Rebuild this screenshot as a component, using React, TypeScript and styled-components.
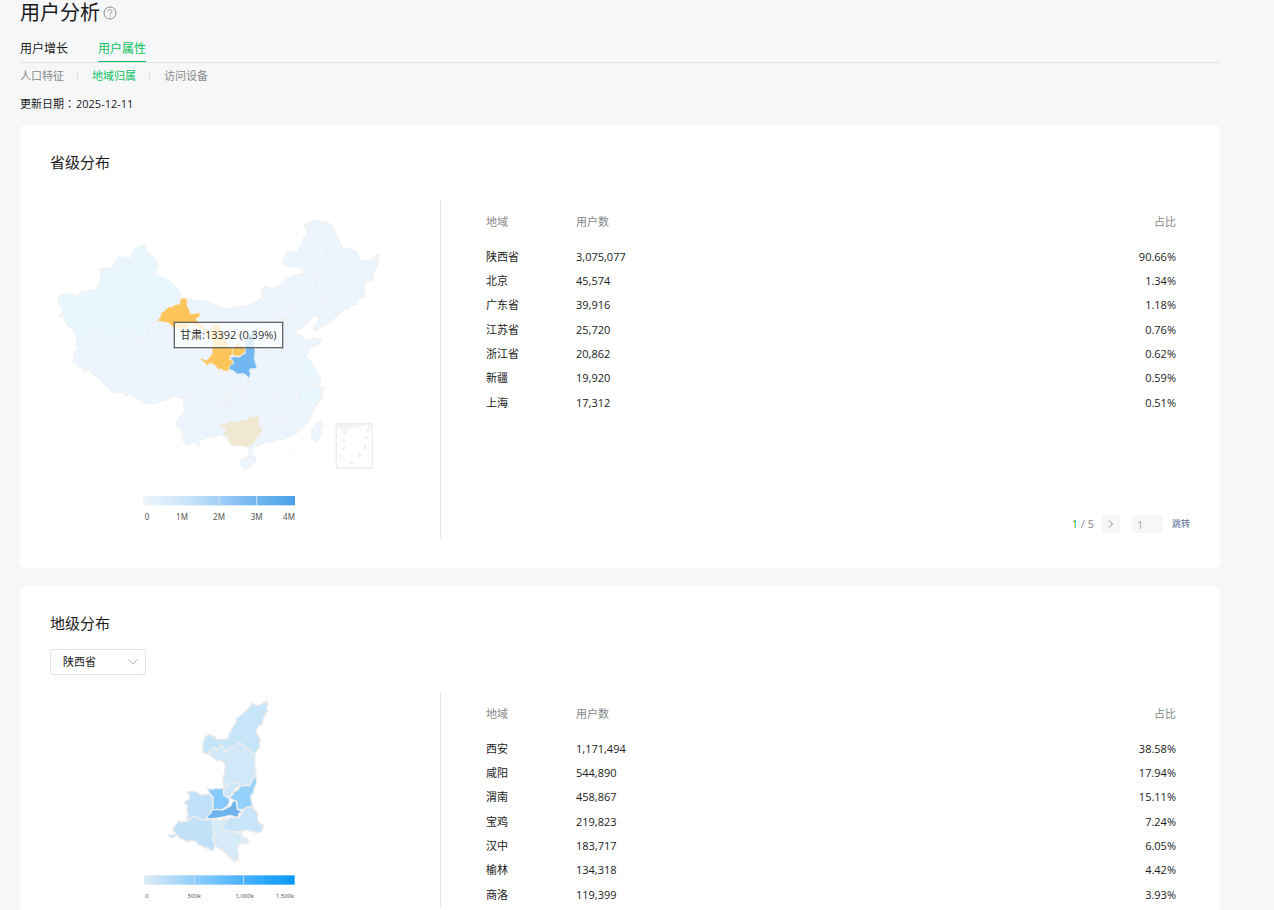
import React from "react";
import styled, { createGlobalStyle } from "styled-components";

const GlobalStyle = createGlobalStyle`
  * { box-sizing: border-box; }
  body {
    margin: 0;
    background: #f6f7f9;
    color: #1a1a1a;
    font-family: "Open Sans", "Noto Sans CJK SC", sans-serif;
    font-size: 11px;
    line-height: 16px;
  }
`;

const Page = styled.div`
  display: flex;
  flex-direction: column;
  min-height: 100vh;
  padding: 0 54px 0 20px;
`;

const TitleRow = styled.header`
  display: flex;
  align-items: center;
  gap: 3px;
  height: 26px;
`;

const PageTitle = styled.h1`
  margin: 0;
  font-size: 20px;
  font-weight: 400;
  line-height: 28px;
`;

const HelpButton = styled.button`
  display: flex;
  padding: 0;
  border: 0;
  background: none;
  color: #8c8c8c;
`;

const Tabs = styled.nav`
  display: flex;
  gap: 30px;
  margin-top: 8px;
  border-bottom: 1px solid #e1e3e5;
`;

const Tab = styled.a<{ $active?: boolean }>`
  height: 28px;
  border-bottom: 1px solid ${(p) => (p.$active ? "#07c160" : "transparent")};
  color: ${(p) => (p.$active ? "#07c160" : "#1a1a1a")};
  font-size: 12px;
  line-height: 30px;
  text-decoration: none;
`;

const SubTabs = styled.nav`
  display: flex;
  align-items: center;
  height: 26px;
`;

const SubTab = styled.a<{ $active?: boolean }>`
  display: flex;
  align-items: center;
  color: ${(p) => (p.$active ? "#07c160" : "#888")};
  text-decoration: none;

  &:not(:first-child)::before {
    content: "";
    width: 1px;
    height: 10px;
    margin: 0 14px 0 13px;
    background: #dcdee0;
  }
`;

const UpdateLine = styled.p`
  display: flex;
  gap: 1px;
  height: 16px;
  margin: 7px 0 13px;
`;

const UpdateLabel = styled.span`
  font-family: "Open Sans", "Noto Sans CJK TC", sans-serif;
`;

const Card = styled.section<{ $last?: boolean }>`
  flex: ${(p) => (p.$last ? "1 0 auto" : "none")};
  margin-bottom: ${(p) => (p.$last ? "0" : "18px")};
  padding: 24px 30px ${(p) => (p.$last ? "0" : "30px")};
  border-radius: ${(p) => (p.$last ? "6px 6px 0 0" : "6px")};
  background: #fff;
`;

const CardTitle = styled.h2`
  margin: 0;
  font-size: 15px;
  font-weight: 400;
  line-height: 26px;
`;

const SelectBox = styled.div`
  display: grid;
  align-items: center;
  width: 96px;
  height: 26px;
  margin-top: 13px;

  & > * { grid-area: 1 / 1; }
  & > svg { justify-self: end; margin-right: 8px; pointer-events: none; }
`;

const Select = styled.select`
  width: 100%;
  height: 26px;
  padding: 0 24px 0 12px;
  border: 1px solid #e2e3e5;
  border-radius: 3px;
  background: #fff;
  color: #1a1a1a;
  font: inherit;
  appearance: none;
`;

const CardBody = styled.div<{ $offset: number }>`
  display: flex;
  margin-top: ${(p) => p.$offset}px;
`;

const MapPanel = styled.div`
  position: relative;
  flex: none;
  width: 391px;
  border-right: 1px solid #e4e5e7;
`;

const Chart = styled.svg`
  display: block;
  width: 390px;
`;

const LegendText = styled.text<{ $size: number }>`
  fill: #555;
  font-family: "Noto Sans", sans-serif;
  font-size: ${(p) => p.$size}px;
  text-anchor: middle;
`;

const Tooltip = styled.div`
  position: absolute;
  top: 122px;
  left: 124px;
  padding: 0 5px;
  border: 1px solid #666;
  background: rgba(255, 255, 255, 0.75);
  box-shadow: 0 0 0 1px rgba(90, 90, 90, 0.3);
  color: #333;
  line-height: 24px;
  white-space: nowrap;
`;

const DataPanel = styled.div`
  display: flex;
  flex: 1;
  flex-direction: column;
  justify-content: space-between;
  padding-left: 45px;
`;

const Table = styled.table`
  width: 100%;
  border-collapse: collapse;

  th, td {
    width: 90px;
    height: 24px;
    padding: 0;
    font-weight: 400;
    text-align: left;
  }
  th { height: 44px; color: #888; }
  tr:nth-child(3n + 1) td { height: 25px; }
  th:nth-child(2), td:nth-child(2) { width: auto; }
  th:last-child, td:last-child { padding-right: 14px; text-align: right; }
`;

const Pager = styled.form`
  display: flex;
  align-items: center;
  justify-content: flex-end;
  height: 28px;
  color: #888;
`;

const CurrentPage = styled.span`
  color: #1aad19;
`;

const NextButton = styled.button`
  display: flex;
  align-items: center;
  justify-content: center;
  width: 18px;
  height: 18px;
  margin: 0 12px 0 8px;
  padding: 0;
  border: 0;
  border-radius: 2px;
  background: #f6f7f9;
  color: #888;
`;

const PageInput = styled.input`
  width: 31px;
  height: 18px;
  padding: 0 5px;
  border: 0;
  border-radius: 2px;
  background: #f6f7f9;
  color: #aaa;
  font: inherit;
`;

const JumpButton = styled.button`
  margin-left: 9px;
  padding: 0;
  border: 0;
  background: none;
  color: #576b95;
  font: inherit;
  font-size: 9px;
`;

type Row = [string, string, string];

const provinces: Row[] = [
  ["陕西省", "3,075,077", "90.66%"],
  ["北京", "45,574", "1.34%"],
  ["广东省", "39,916", "1.18%"],
  ["江苏省", "25,720", "0.76%"],
  ["浙江省", "20,862", "0.62%"],
  ["新疆", "19,920", "0.59%"],
  ["上海", "17,312", "0.51%"],
];

const cities: Row[] = [
  ["西安", "1,171,494", "38.58%"],
  ["咸阳", "544,890", "17.94%"],
  ["渭南", "458,867", "15.11%"],
  ["宝鸡", "219,823", "7.24%"],
  ["汉中", "183,717", "6.05%"],
  ["榆林", "134,318", "4.42%"],
  ["商洛", "119,399", "3.93%"],
];

function RegionTable({ rows }: { rows: Row[] }) {
  return (
    <Table>
      <thead>
        <tr>
          <th scope="col">地域</th>
          <th scope="col">用户数</th>
          <th scope="col">占比</th>
        </tr>
      </thead>
      <tbody>
        {rows.map(([name, users, share]) => (
          <tr key={name}>
            <td>{name}</td>
            <td>{users}</td>
            <td>{share}</td>
          </tr>
        ))}
      </tbody>
    </Table>
  );
}

const mainland =
  "54,265 64,256 78,252 90,256 95,250 106,257 114,256 122,248 140,244 156,240 172,235 175,224 182,212 183,185 179,176 200,174 218,174 222,160 228,152 238,135 250,143 262,143 274,145 278,122 284,118 296,115 301,104 307,107 314,106 317,120 328,130 334,140 348,148 352,160 354,172 347,184 346,193 352,200 370,204 385,210 402,224 415,238 420,252 425,265 440,266 470,272 500,274 520,280 535,288 558,297 580,292 600,290 620,286 645,280 656,270 668,265 668,255 664,245 666,236 675,228 690,234 705,235 715,226 725,222 738,208 760,196 775,194 793,190 788,182 785,178 775,172 765,168 754,171 740,168 727,160 732,143 742,122 755,125 772,126 779,110 788,98 790,85 800,75 800,60 793,48 797,42 805,38 820,34 835,30 850,36 865,38 880,52 886,68 895,85 900,100 908,115 922,116 940,120 955,130 955,140 962,152 975,154 990,152 1003,140 1018,132 1014,150 1010,170 1001,186 998,210 978,212 972,225 974,235 975,262 966,264 960,268 950,276 950,285 940,284 930,288 930,297 920,298 910,296 902,310 888,322 875,335 858,345 845,350 832,358 822,362 820,350 830,340 835,325 828,318 818,322 810,328 804,338 795,345 780,358 765,365 772,375 790,378 795,392 810,390 822,382 834,388 845,388 840,400 830,404 820,408 808,418 800,430 798,440 808,450 815,455 818,466 825,475 830,488 840,500 842,522 830,526 842,530 852,536 845,550 846,560 840,574 832,584 822,595 818,612 808,628 800,640 790,652 780,658 772,668 760,675 748,680 730,688 715,688 700,692 685,698 670,700 656,708 645,708 635,718 640,732 632,738 624,727 625,712 618,710 600,706 585,708 570,700 565,688 550,680 538,674 525,682 510,680 495,686 478,690 480,706 472,710 465,702 458,695 450,704 438,704 430,694 425,685 428,670 425,660 417,652 405,645 410,634 415,630 420,618 432,610 432,595 432,580 430,568 415,562 400,560 385,568 365,572 345,580 315,580 305,570 285,565 270,550 258,560 254,550 240,546 226,547 212,542 200,528 190,522 182,508 170,500 158,494 148,480 135,485 128,474 115,470 98,455 104,440 99,426 112,420 108,405 112,390 105,370 98,358 88,352 75,335 68,318 56,318 68,310 66,290 56,285";

const provinceBorders = [
  "112,390 130,384 145,375 160,380 180,376 205,386 222,380 240,380 262,376 290,380 310,384 325,388 329,376 322,362 324,350 318,342 340,338 355,332",
  "318,386 298,388 300,402 295,412 297,432 312,448 330,458 348,464 365,468 382,480 400,490 414,486 430,478 424,462 422,450 435,448 445,462 458,470 470,478 485,474 500,465",
  "430,478 438,492 442,510 438,528 440,545 434,556 430,568",
  "440,545 450,562 462,568 470,590 480,598 490,613 500,605 510,600 520,588 530,585 545,588 555,580",
  "800,56 818,56 826,68 838,82 852,84 862,92 872,88 878,98 870,110 858,116 864,130 855,146 840,150 838,160 844,172 838,190 828,196 826,212 845,205 862,212 870,205 882,212 895,218 910,230 926,226 932,234 942,240 952,250 962,240 974,245",
  "826,212 828,230 826,240 842,242 858,248 862,260 855,270 868,280 880,290 885,305 890,318",
  "855,270 842,276 828,268 815,282 806,292 796,300 788,318 778,316 774,304 764,300 760,285 748,288 738,298 720,295 705,302 704,318 696,326 688,334 672,340 660,350 648,358",
  "705,302 716,312 722,328 734,320 744,328 742,340 756,346 762,358",
  "734,320 728,334 730,348 742,352 742,340",
  "722,328 712,342 702,352 704,370 700,390 702,405 694,418 680,424 665,436 645,444",
  "762,370 748,378 738,395 726,400 726,420 718,434 705,444 688,446",
  "718,434 730,438 742,448 756,440 772,446 786,440 800,438",
  "742,448 758,460 750,475 764,488 778,496 788,508 800,504 810,515 830,526",
  "750,475 738,480 730,500 715,504 700,498 684,500 670,490 655,486 640,490 628,484",
  "628,484 636,500 622,512 632,520 620,534 612,548 600,556",
  "632,520 650,528 666,540 685,544 702,540 720,548 735,545 752,550 765,545 776,548 785,530 788,508",
  "555,560 570,550 576,536 592,542 600,530 612,530 620,534",
  "620,552 632,550 645,556 660,550 675,548 690,554 705,555 720,550",
  "705,555 708,570 704,588 708,602 700,618 702,632",
  "622,552 618,568 622,582 616,596 626,604 630,618",
  "530,640 536,626 532,608 536,590 545,582 560,590 570,584 572,570 558,562",
  "666,645 680,636 702,632 722,638 736,634 738,618 742,600 758,596 765,584 780,578 790,584 800,592 812,600",
  "736,634 748,640 755,650 766,658 768,668",
  "780,578 776,560 776,548",
  "500,465 506,476 520,486 540,484 550,492 568,488",
  "555,580 560,560 575,550 590,540 600,530 590,515 600,500 612,490",
];

function ChinaMap() {
  return (
    <Chart viewBox="30 -30 1170 1014" role="img" aria-label="省级分布">
      <defs>
        <linearGradient id="provinceScale">
          <stop offset="0" stopColor="#edf6fd" />
          <stop offset="0.3" stopColor="#c8e4f9" />
          <stop offset="0.65" stopColor="#82bdf1" />
          <stop offset="1" stopColor="#4aa1e9" />
        </linearGradient>
      </defs>
      <g stroke="#f0f0f0" strokeWidth="3" strokeLinejoin="round">
        <polygon points={mainland} fill="#ecf5fd" />
        <polygon
          fill="#eaf6fd"
          stroke="none"
          points="54,265 78,252 106,257 172,235 183,212 183,176 218,174 238,137 274,145 280,121 305,106 314,110 328,132 350,150 352,172 346,193 385,210 415,238 425,265 421,282 385,292 355,332 318,342 325,386 290,380 205,386 145,375 112,388 105,370 75,335 68,318 66,290"
        />
        <polygon fill="#e9f6fe" points="782,540 800,528 830,526 850,537 844,562 822,595 800,590 782,578 776,560" />
        <polygon fill="#e9f6fe" stroke="none" points="766,448 798,440 815,455 825,475 840,500 840,521 812,514 786,490 778,465" />
        <g fill="none" stroke="#eeeff0" strokeWidth="4">
          {provinceBorders.map((points) => (
            <polyline key={points} points={points} />
          ))}
        </g>
        <polygon fill="#ecf5fd" points="600,760 604,748 612,744 622,740 635,738 649,742 646,754 638,762 628,774 614,777 604,770" />
        <polygon fill="#ecf5fd" points="832,638 845,633 849,642 843,660 840,676 834,690 830,698 824,692 815,684 814,672 818,658 824,646" />
        <polygon
          fill="#f1e8d1"
          stroke="#f1ead8"
          points="535,640 548,646 556,640 566,642 572,634 582,638 590,634 600,636 610,630 620,632 630,622 642,622 653,614 658,626 654,640 660,650 667,656 662,668 656,678 648,688 640,700 632,704 622,710 606,706 590,706 572,702 566,692 564,684 574,680 560,676 550,672 558,664 556,656 546,652"
        />
      </g>
      <g transform="translate(330 240)" strokeLinejoin="round">
        <path
          fill="#fcc55c"
          stroke="#f7e3bd"
          strokeWidth="2"
          d="M23 92 30 84 35 68 45 62 55 52 66 51 75 45 90 42 91 27 107 25 112 35 110 45 118 60 120 72 132 72 148 68 150 78 136 88 145 98 160 108 172 122 184 126 184 108 206 106 214 110 210 122 222 138 228 155 235 170 248 178 250 192 240 198 238 208 250 214 248 228 238 230 238 242 220 243 216 236 205 238 195 225 180 218 172 226 162 216 151 208 157 206 168 213 180 202 188 190 186 170 190 160 184 145 172 134 158 118 142 108 122 102 112 116 95 116 70 112 55 98 40 95ZM250 172 262 162 275 168 285 172 285 184 276 194 265 198 252 196 246 186Z"
        />
        <path
          fill="#73b7f2"
          stroke="#dcebf8"
          strokeWidth="2"
          d="M286 174 290 155 292 140 304 132 308 120 326 112 320 126 314 145 312 160 315 185 312 205 316 218 321 235 300 236 298 244 302 252 296 265 288 254 278 250 262 252 250 242 238 238 240 226 250 222 250 212 240 205 252 200 270 202 278 194 286 190Z"
        />
      </g>
      <g fill="none" stroke="#eee" strokeWidth="4">
        <rect x="889" y="641" width="108" height="134" />
        <path
          fill="#f4f4f4"
          strokeWidth="1"
          d="M890 642H996L990 656 982 644 950 652 926 656 912 662 892 652Z"
        />
        <path
          strokeWidth="7"
          d="M918 661 911 672M910 688 912 696M916 712 908 718M900 734 904 742M928 760 938 756M954 742 962 732M973 717 976 705M977 688 980 678M981 666 987 656"
        />
      </g>
      <path fill="#eee" d="M739 719h4v3h-4zM754 725h5v4h-5zM838 697h6v2h-6zM874 622h3v3h-3z" />
      <rect x="309" y="858" width="456" height="28" fill="url(#provinceScale)" />
      <path stroke="#d5e5f2" strokeWidth="3" d="M425 858v28M537 858v28M650 858v28" />
      <LegendText $size={24} x="321" y="929">0</LegendText>
      <LegendText $size={24} x="426" y="929">1M</LegendText>
      <LegendText $size={24} x="537" y="929">2M</LegendText>
      <LegendText $size={24} x="650" y="929">3M</LegendText>
      <LegendText $size={24} x="747" y="929">4M</LegendText>
    </Chart>
  );
}

const cityShapes: { fill: string; points: string }[] = [
  {
    fill: "#c7e5f9",
    points:
      "408,38 412,30 414,44 408,55 413,65 406,74 400,85 398,100 386,108 380,118 380,130 392,150 388,160 390,172 382,180 376,192 366,190 358,178 345,174 340,166 328,158 320,166 312,170 300,172 292,178 290,188 282,184 280,170 272,165 268,174 262,182 254,174 245,175 238,184 238,194 220,188 218,165 220,152 226,140 240,132 248,140 256,140 258,148 276,148 295,145 298,125 305,128 305,115 318,98 318,86 332,76 345,65 356,54 364,46 368,38 376,46 388,46 395,42 402,35",
  },
  {
    fill: "#d1e8f8",
    points:
      "238,194 238,184 245,175 254,174 262,182 268,174 272,165 280,170 282,184 290,188 292,178 300,172 312,170 320,166 328,158 340,166 345,174 358,178 366,190 374,192 375,210 376,240 379,262 370,268 365,280 360,288 345,284 330,290 322,282 305,280 294,285 280,280 278,262 284,250 284,238 287,225 275,212 262,212 250,203",
  },
  {
    fill: "#86cafb",
    points:
      "232,293 244,298 258,295 272,296 282,294 282,282 287,282 288,290 280,300 282,315 292,322 298,325 298,340 290,350 278,358 262,360 248,358 249,340 248,320 238,308",
  },
  {
    fill: "#95d2fb",
    points:
      "379,262 380,280 372,296 370,308 362,318 364,334 368,345 356,352 345,355 336,360 322,356 320,336 312,330 298,324 308,314 312,305 326,298 328,290 345,286 360,288 364,278 370,266",
  },
  {
    fill: "#cfe7f8",
    points: "300,282 312,280 325,280 325,290 314,296 308,308 300,318 290,322 280,312 282,298 290,288",
  },
  {
    fill: "#c0e1f9",
    points:
      "170,305 184,304 200,305 212,315 225,314 238,312 248,322 248,358 242,366 240,376 230,388 212,388 200,382 190,380 180,384 170,388 174,372 170,360 174,348 164,340 168,332 178,328 178,316",
  },
  {
    fill: "#c1e1f8",
    points:
      "115,435 126,435 138,430 130,424 130,412 142,400 142,393 156,396 172,393 182,384 190,380 212,388 230,390 247,388 248,410 252,430 248,448 256,462 250,480 240,482 235,474 225,474 214,466 204,465 198,455 185,452 172,456 160,448 150,446 140,435 128,443 120,444",
  },
  {
    fill: "#d6eaf7",
    points:
      "248,392 262,388 272,392 285,384 290,392 284,402 275,408 285,422 298,426 312,424 326,430 335,428 335,440 350,445 355,455 352,462 338,460 325,465 323,480 326,494 325,510 312,514 300,505 290,492 278,482 265,475 255,465 250,450 253,430 248,412",
  },
  {
    fill: "#c7e4f9",
    points:
      "275,408 284,402 290,390 300,382 325,384 336,370 340,362 348,352 368,350 376,362 384,370 382,390 392,402 400,404 398,420 390,428 376,426 362,424 350,420 335,424 320,424 304,426 285,422",
  },
  {
    fill: "#70b4ee",
    points:
      "230,386 234,376 242,370 245,360 262,358 278,360 290,354 302,348 308,334 318,332 320,345 322,358 336,364 326,372 325,382 314,380 300,376 285,380 270,383 252,385",
  },
];

function ShaanxiMap() {
  return (
    <Chart viewBox="-240 6 1170 645" role="img" aria-label="地级分布">
      <defs>
        <linearGradient id="cityScale">
          <stop offset="0" stopColor="#dcecf7" />
          <stop offset="0.33" stopColor="#91cffb" />
          <stop offset="0.66" stopColor="#48b2fe" />
          <stop offset="1" stopColor="#0598ff" />
        </linearGradient>
      </defs>
      <g stroke="#ececec" strokeWidth="4" strokeLinejoin="round">
        {cityShapes.map((shape) => (
          <polygon key={shape.points} fill={shape.fill} points={shape.points} />
        ))}
      </g>
      <rect x="41" y="556" width="453" height="28" fill="url(#cityScale)" />
      <path stroke="#c5e0f5" strokeWidth="3" d="M193 556v28M341 556v28" />
      <LegendText $size={18} x="51" y="623">0</LegendText>
      <LegendText $size={18} x="193" y="623">500k</LegendText>
      <LegendText $size={18} x="344" y="623">1,000k</LegendText>
      <LegendText $size={18} x="465" y="623">1,500k</LegendText>
    </Chart>
  );
}

export default function App() {
  return (
    <>
      <GlobalStyle />
      <Page>
        <TitleRow>
          <PageTitle>用户分析</PageTitle>
          <HelpButton type="button" aria-label="帮助">
            <svg width="14" height="14" viewBox="0 0 14 14" fill="none" stroke="currentColor">
              <circle cx="7" cy="7" r="6" />
              <path d="M5 5.6c0-1.200.9-1.900 2-1.900s2 .8 2 1.800c0 1.400-2 1.400-2 2.900M7 9.400v1.200" />
            </svg>
          </HelpButton>
        </TitleRow>
        <Tabs>
          <Tab href="#growth">用户增长</Tab>
          <Tab href="#attributes" $active>用户属性</Tab>
        </Tabs>
        <SubTabs>
          <SubTab href="#people">人口特征</SubTab>
          <SubTab href="#region" $active>地域归属</SubTab>
          <SubTab href="#device">访问设备</SubTab>
        </SubTabs>
        <UpdateLine>
          <UpdateLabel>更新日期：</UpdateLabel>
          <time>2025-12-11</time>
        </UpdateLine>

        <Card>
          <CardTitle>省级分布</CardTitle>
          <CardBody $offset={25}>
            <MapPanel>
              <ChinaMap />
              <Tooltip role="tooltip">甘肃:13392 (0.39%)</Tooltip>
            </MapPanel>
            <DataPanel>
              <RegionTable rows={provinces} />
              <Pager>
                <CurrentPage>1</CurrentPage>&nbsp;/ 5
                <NextButton type="button" aria-label="下一页">
                  <svg width="6" height="8" viewBox="0 0 6 8" fill="none" stroke="currentColor">
                    <path d="M1 .5 4.5 4 1 7.5" />
                  </svg>
                </NextButton>
                <PageInput aria-label="页码" defaultValue="1" />
                <JumpButton type="button">跳转</JumpButton>
              </Pager>
            </DataPanel>
          </CardBody>
        </Card>

        <Card $last>
          <CardTitle>地级分布</CardTitle>
          <SelectBox>
            <Select aria-label="省份" defaultValue="陕西省">
              <option>陕西省</option>
            </Select>
            <svg width="10" height="6" viewBox="0 0 10 6" fill="none" stroke="#b5b7ba">
              <path d="M.5 .5 5 5 9.5 .5" />
            </svg>
          </SelectBox>
          <CardBody $offset={17}>
            <MapPanel>
              <ShaanxiMap />
            </MapPanel>
            <DataPanel>
              <RegionTable rows={cities} />
            </DataPanel>
          </CardBody>
        </Card>
      </Page>
    </>
  );
}
